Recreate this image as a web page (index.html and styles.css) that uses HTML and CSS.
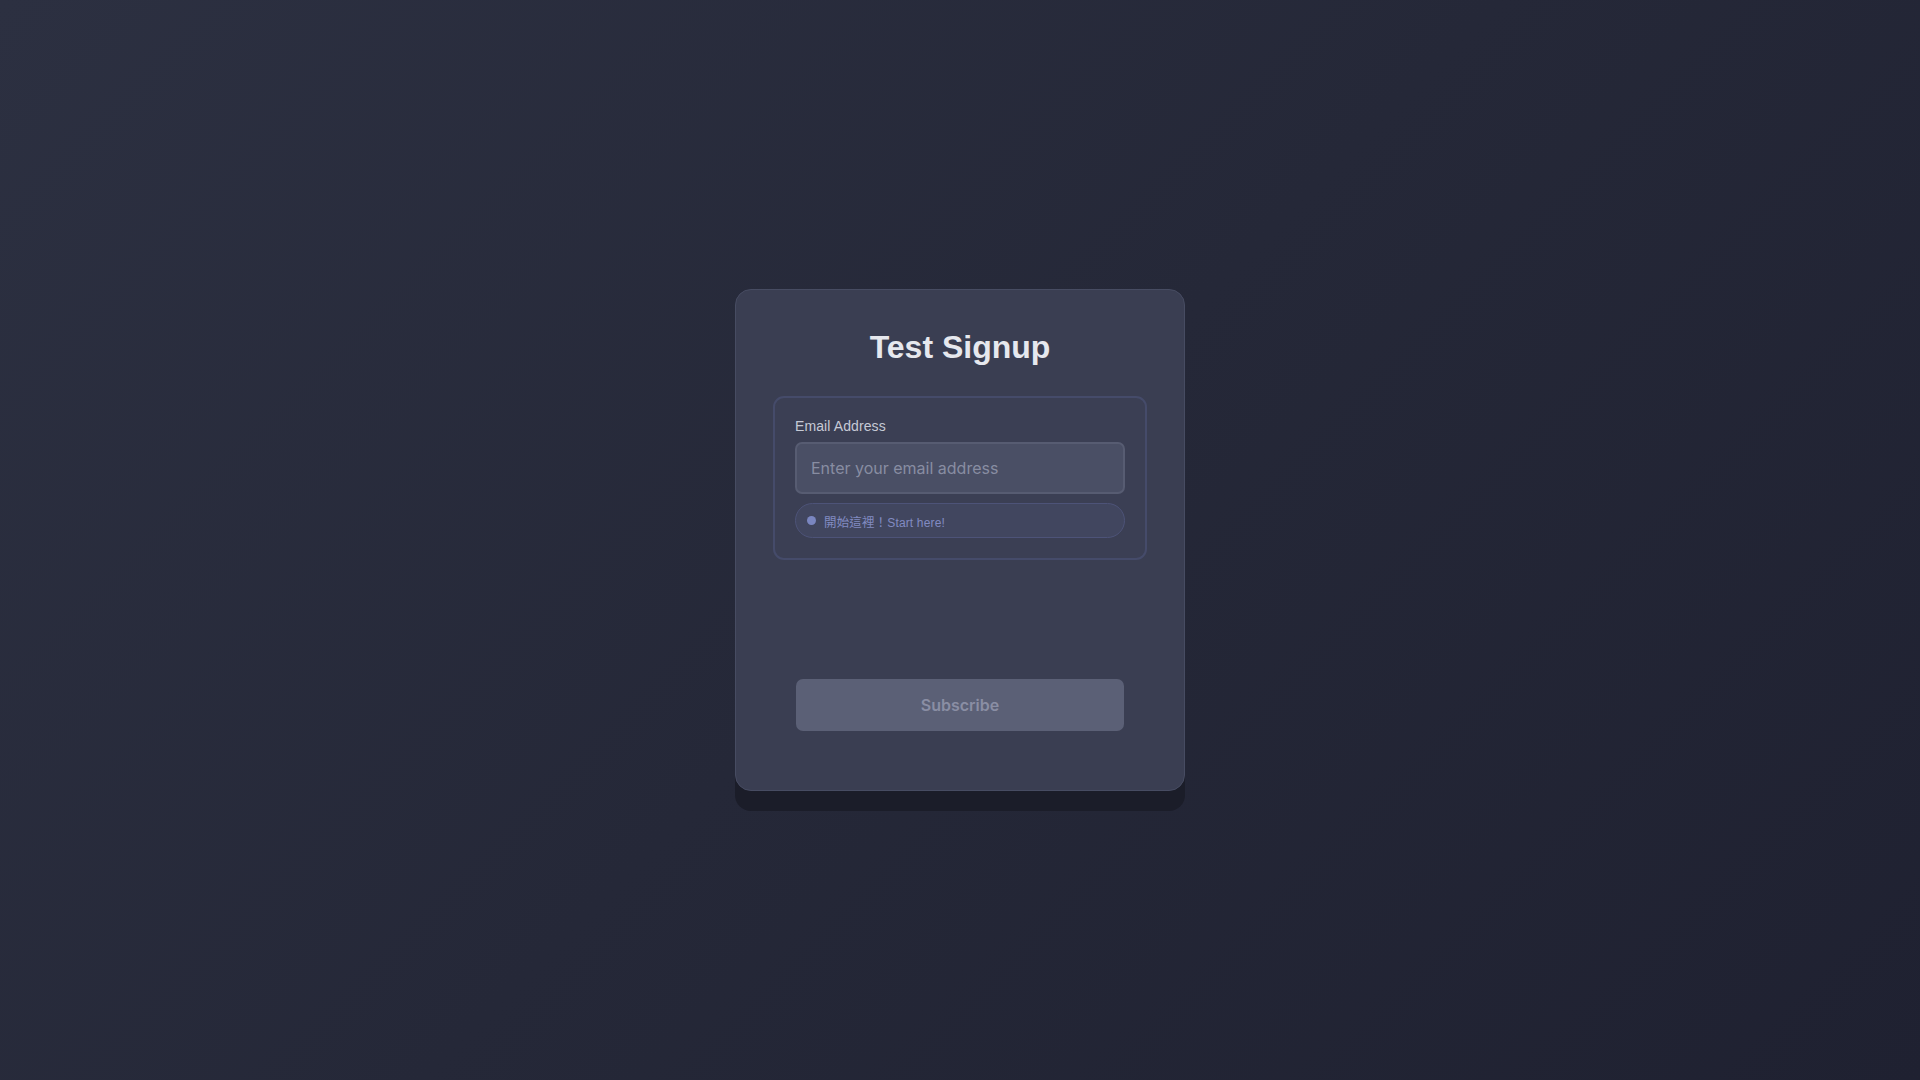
FILE: index.html
```html
<!DOCTYPE html>
<html lang="en">
<head>
<meta charset="utf-8">
<title>Test Signup</title>
<link rel="stylesheet" href="styles.css">
</head>
<body>
<main class="page">
  <section class="card">
    <h1 class="title">Test Signup</h1>
    <div class="field-box">
      <label class="label" for="email">Email Address</label>
      <input class="input" id="email" type="email" placeholder="Enter your email address">
      <div class="hint"><span class="dot"></span><span class="hint-text"><span class="cjk">開始這裡！</span>Start here!</span></div>
    </div>
    <div class="spacer"></div>
    <button class="btn" type="button">Subscribe</button>
  </section>
</main>
</body>
</html>
```

FILE: styles.css
```css
* { box-sizing: border-box; }
html, body { margin: 0; padding: 0; }
body {
  font-family: "Liberation Sans", Arial, "Noto Sans CJK TC", sans-serif;
  background: linear-gradient(135deg, #2c3041 0%, #252838 50%, #1f2131 100%);
  min-height: 100vh;
}
.page {
  width: 100%;
  height: 100vh;
  display: flex;
  align-items: center;
  justify-content: center;
}
.card {
  width: 450px;
  background: #3a3e52;
  border: 1px solid #474c62;
  border-radius: 16px;
  padding: 39px 37px 59px;
  box-shadow: 0 20px 0 #1b1d29;
  display: flex;
  flex-direction: column;
}
.title {
  margin: 0 0 30px;
  font-family: "Liberation Sans", Arial, sans-serif;
  font-size: 32px;
  font-weight: 700;
  line-height: 37px;
  color: #e6e8ee;
  text-align: center;
}
.field-box {
  border: 2px solid #454b6a;
  border-radius: 11px;
  background: #3b3f54;
  padding: 20px;
  display: flex;
  flex-direction: column;
}
.label {
  font-size: 14px;
  line-height: 16px;
  color: #c6cad6;
  letter-spacing: 0.1px;
  margin-bottom: 8px;
}
.input {
  height: 52px;
  width: 100%;
  padding: 0 14px;
  background: #4a4f65;
  border: 2px solid #575c72;
  border-radius: 7px;
  font-family: Inter, "Noto Sans", sans-serif;
  font-size: 16px;
  color: #e6e8ee;
  outline: none;
}
.input::placeholder { color: #888da2; }
.hint {
  margin-top: 9px;
  height: 35px;
  border: 1px solid #4d5378;
  border-radius: 18px;
  background: #41465f;
  display: flex;
  align-items: center;
  padding: 0 11px;
  gap: 8px;
}
.dot {
  width: 9px;
  height: 9px;
  border-radius: 50%;
  background: #7a86c0;
  flex: none;
}
.hint-text {
  font-family: "Liberation Sans", Arial, "Noto Sans CJK TC", sans-serif;
  font-size: 12px;
  letter-spacing: 0.15px;
  color: #828bc2;
  padding-top: 1px;
}
.cjk { font-family: "Noto Sans CJK TC", sans-serif; font-size: 12.5px; }
.spacer { height: 119px; }
.btn {
  margin: 0 23px;
  height: 52px;
  border: none;
  border-radius: 7px;
  background: #5b6076;
  color: #8a8ea4;
  font-family: Inter, "Noto Sans", sans-serif;
  font-size: 16px;
  font-weight: 600;
}
```
